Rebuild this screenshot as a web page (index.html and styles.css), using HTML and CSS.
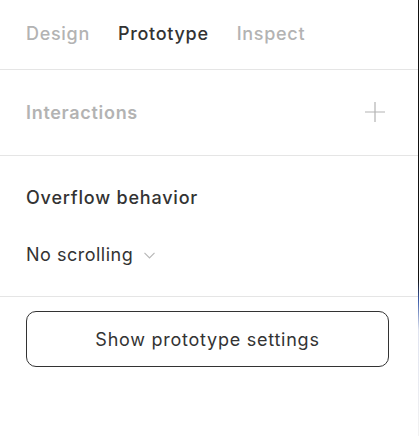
FILE: index.html
```html
<!DOCTYPE html>
<html>
<head>
<meta charset="utf-8">
<link rel="stylesheet" href="styles.css">
</head>
<body>
<div class="frame">
  <div class="panel">
    <div class="tabs">
      <span class="tab">Design</span>
      <span class="tab active">Prototype</span>
      <span class="tab">Inspect</span>
    </div>
    <div class="section interactions">
      <span class="muted-title">Interactions</span>
      <svg class="plus" width="20" height="20" viewBox="0 0 20 20"><path d="M10 0v20M0 10h20" stroke="#b3b3b3" stroke-width="1.2" fill="none"/></svg>
    </div>
    <div class="section overflow">
      <div class="title">Overflow behavior</div>
      <div class="select">
        <span>No scrolling</span>
        <svg class="chev" width="11" height="7" viewBox="0 0 11 7"><path d="M0.5 0.8L5.5 5.8L10.5 0.8" stroke="#b8b8b8" stroke-width="1.2" fill="none"/></svg>
      </div>
    </div>
    <div class="footer">
      <button class="btn">Show prototype settings</button>
    </div>
  </div>
  <div class="edge"></div>
</div>
</body>
</html>
```
FILE: styles.css
```css
* { box-sizing: border-box; }
html, body { margin: 0; padding: 0; background: #fff; }
body { font-family: Inter, "Noto Sans", sans-serif; width: 419px; height: 436px; overflow: hidden; }
.frame { display: flex; height: 436px; }
.panel { flex: 1; display: flex; flex-direction: column; }
.edge { width: 1px; background: linear-gradient(to bottom, #111 0, #111 280px, #3a5aa8 300px, #dfe3ef 330px, #f2f2f2 436px); }
.tabs { display: flex; gap: 28px; padding: 0 26px; height: 70px; align-items: center; border-bottom: 1px solid #e5e5e5; padding-bottom: 3px; }
.tab { font-size: 18px; font-weight: 500; color: #b3b3b3; letter-spacing: 0.7px; }
.tab.active { color: #333; }
.section { border-bottom: 1px solid #e5e5e5; }
.interactions { height: 86px; display: flex; align-items: center; justify-content: space-between; padding: 0 33px 0 26px; }
.muted-title { font-size: 18px; font-weight: 600; color: #b3b3b3; letter-spacing: 0.7px; }
.plus { display: block; margin-top: -2px; }
.overflow { height: 141px; padding: 30px 26px 0 26px; }
.title { font-size: 18px; font-weight: 500; color: #333; line-height: 24px; letter-spacing: 0.8px; }
.select { margin-top: 33px; display: flex; align-items: center; gap: 11px; font-size: 18px; color: #333; line-height: 24px; letter-spacing: 0.5px; }
.chev { display: block; }
.footer { padding: 14px 29px 0 26px; }
.btn { width: 100%; height: 56px; border: 1px solid #333; border-radius: 10px; background: #fff; font-family: Inter, "Noto Sans", sans-serif; font-size: 18px; color: #333; letter-spacing: 0.75px; }
```
